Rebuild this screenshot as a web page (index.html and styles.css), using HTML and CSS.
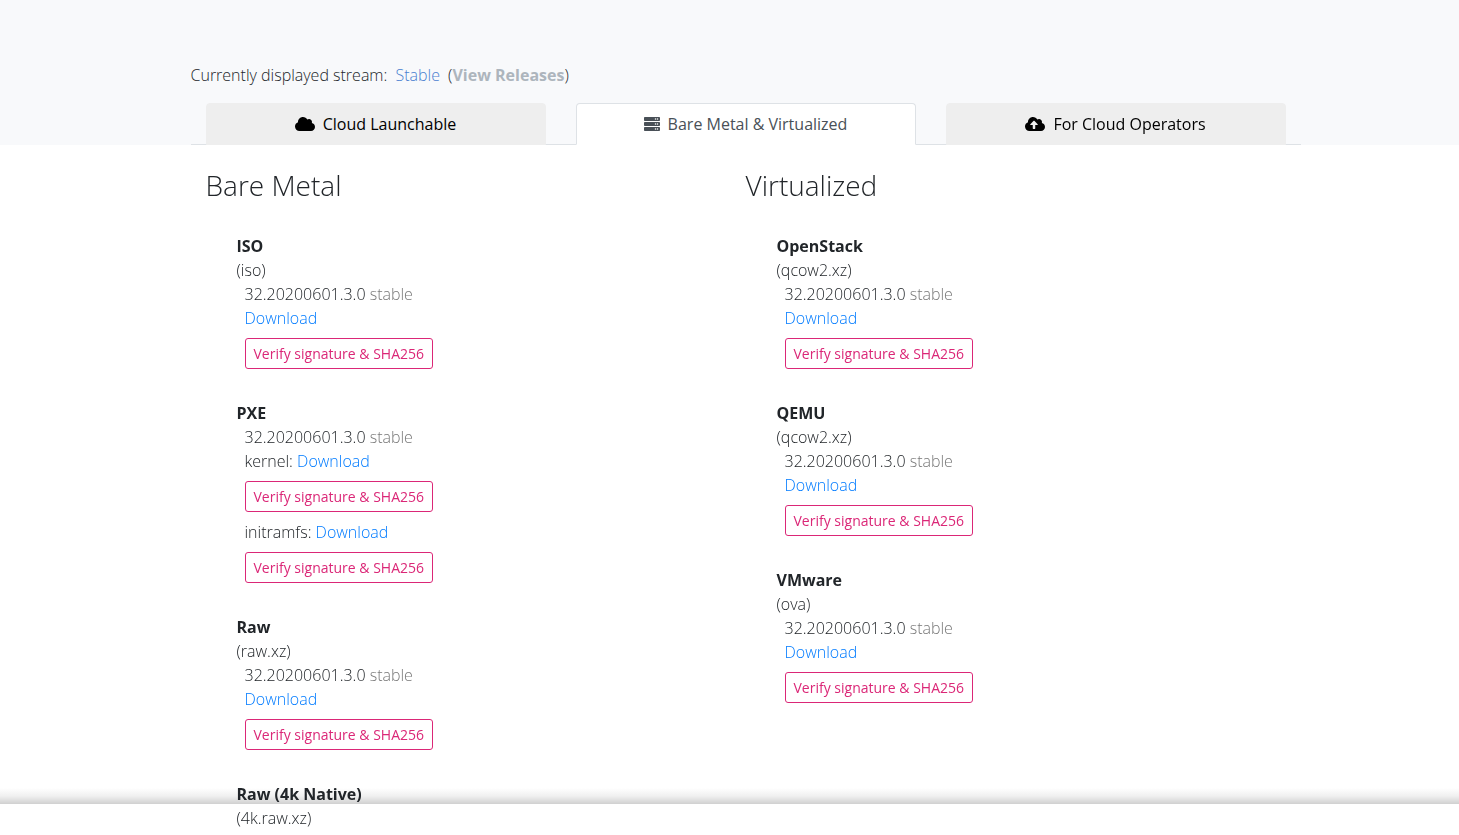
FILE: index.html
```html
<!DOCTYPE html>
<html lang="en">
<head>
<meta charset="utf-8">
<meta name="viewport" content="width=device-width, initial-scale=1">
<title>Downloads</title>
<link rel="stylesheet" href="styles.css">
</head>
<body>
<header class="masthead band">
  <div class="container">
    <p class="stream">Currently displayed stream: <a class="stream-name" href="#stable">Stable</a> (<a class="releases" href="#releases">View Releases</a>)</p>
    <nav class="tabs">
      <button class="tab" type="button"><svg class="icon icon-wide" viewBox="0 0 640 512" aria-hidden="true"><path d="M537.600 226.600c4.100-10.700 6.400-22.400 6.400-34.600 0-53-43-96-96-96-19.700 0-38.100 6-53.300 16.200C367 64.200 315.300 32 256 32c-88.400 0-160 71.600-160 160 0 2.700.1 5.400.2 8.100C40.200 219.800 0 273.200 0 336c0 79.500 64.500 144 144 144h368c70.700 0 128-57.300 128-128 0-61.900-44-113.600-102.400-125.400z"/></svg>Cloud Launchable</button>
      <button class="tab tab-active" type="button"><svg class="icon" viewBox="0 0 512 512" aria-hidden="true"><path d="M480 160H32c-17.700 0-32-14.300-32-32V64c0-17.700 14.300-32 32-32h448c17.700 0 32 14.300 32 32v64c0 17.700-14.300 32-32 32zm-48-88c-13.300 0-24 10.700-24 24s10.700 24 24 24 24-10.700 24-24-10.700-24-24-24zm-64 0c-13.300 0-24 10.700-24 24s10.700 24 24 24 24-10.700 24-24-10.700-24-24-24zm112 248H32c-17.700 0-32-14.300-32-32v-64c0-17.700 14.300-32 32-32h448c17.700 0 32 14.300 32 32v64c0 17.700-14.300 32-32 32zm-48-88c-13.300 0-24 10.700-24 24s10.700 24 24 24 24-10.700 24-24-10.700-24-24-24zm-64 0c-13.300 0-24 10.700-24 24s10.700 24 24 24 24-10.700 24-24-10.700-24-24-24zm112 248H32c-17.700 0-32-14.300-32-32v-64c0-17.700 14.300-32 32-32h448c17.700 0 32 14.300 32 32v64c0 17.700-14.300 32-32 32zm-48-88c-13.300 0-24 10.700-24 24s10.700 24 24 24 24-10.700 24-24-10.700-24-24-24zm-64 0c-13.300 0-24 10.700-24 24s10.700 24 24 24 24-10.700 24-24-10.700-24-24-24z"/></svg>Bare Metal &amp; Virtualized</button>
      <button class="tab" type="button"><svg class="icon icon-wide" viewBox="0 0 640 512" aria-hidden="true"><path d="M537.600 226.600c4.100-10.700 6.400-22.400 6.400-34.600 0-53-43-96-96-96-19.700 0-38.100 6-53.300 16.200C367 64.200 315.300 32 256 32c-88.400 0-160 71.600-160 160 0 2.700.1 5.400.2 8.100C40.200 219.800 0 273.200 0 336c0 79.500 64.500 144 144 144h368c70.700 0 128-57.300 128-128 0-61.900-44-113.600-102.400-125.400zM393.400 288H328v112c0 8.800-7.200 16-16 16h-48c-8.800 0-16-7.200-16-16V288h-65.400c-14.300 0-21.400-17.200-11.300-27.300l105.400-105.400c6.200-6.200 16.400-6.200 22.600 0l105.400 105.400c10.100 10.100 2.900 27.300-11.300 27.300z"/></svg>For Cloud Operators</button>
    </nav>
  </div>
</header>
<main class="band">
  <div class="container columns">
    <section>
      <h3 class="heading">Bare Metal</h3>
      <div class="platforms">
        <article>
          <h4 class="name">ISO</h4>
          <div>(iso)</div>
          <div class="details">
            <div>32.20200601.3.0 <span class="muted">stable</span></div>
            <div><a class="download" href="#iso">Download</a></div>
            <button class="verify" type="button">Verify signature &amp; SHA256</button>
          </div>
        </article>
        <article>
          <h4 class="name">PXE</h4>
          <div class="details">
            <div>32.20200601.3.0 <span class="muted">stable</span></div>
            <div>kernel: <a class="download" href="#kernel">Download</a></div>
            <button class="verify" type="button">Verify signature &amp; SHA256</button>
            <div class="artifact">initramfs: <a class="download" href="#initramfs">Download</a></div>
            <button class="verify" type="button">Verify signature &amp; SHA256</button>
          </div>
        </article>
        <article>
          <h4 class="name">Raw</h4>
          <div>(raw.xz)</div>
          <div class="details">
            <div>32.20200601.3.0 <span class="muted">stable</span></div>
            <div><a class="download" href="#raw">Download</a></div>
            <button class="verify" type="button">Verify signature &amp; SHA256</button>
          </div>
        </article>
        <article>
          <h4 class="name">Raw (4k Native)</h4>
          <div>(4k.raw.xz)</div>
        </article>
      </div>
    </section>
    <section>
      <h3 class="heading">Virtualized</h3>
      <div class="platforms">
        <article>
          <h4 class="name">OpenStack</h4>
          <div>(qcow2.xz)</div>
          <div class="details">
            <div>32.20200601.3.0 <span class="muted">stable</span></div>
            <div><a class="download" href="#openstack">Download</a></div>
            <button class="verify" type="button">Verify signature &amp; SHA256</button>
          </div>
        </article>
        <article>
          <h4 class="name">QEMU</h4>
          <div>(qcow2.xz)</div>
          <div class="details">
            <div>32.20200601.3.0 <span class="muted">stable</span></div>
            <div><a class="download" href="#qemu">Download</a></div>
            <button class="verify" type="button">Verify signature &amp; SHA256</button>
          </div>
        </article>
        <article>
          <h4 class="name">VMware</h4>
          <div>(ova)</div>
          <div class="details">
            <div>32.20200601.3.0 <span class="muted">stable</span></div>
            <div><a class="download" href="#vmware">Download</a></div>
            <button class="verify" type="button">Verify signature &amp; SHA256</button>
          </div>
        </article>
      </div>
    </section>
  </div>
</main>
<div class="bottom-shade"></div>
</body>
</html>
```
FILE: styles.css
```css
* {
  box-sizing: border-box;
}

body {
  margin: 0;
  background: #fff;
  color: #212529;
  font: 300 16px/24px "Open Sans", sans-serif;
}

a {
  text-decoration: none;
}

button {
  font-family: inherit;
  cursor: pointer;
}

.band {
  padding-left: 32px;
}

.masthead {
  padding-top: 63px;
  background: #f8f9fb;
}

.container {
  max-width: 1110px;
  margin: 0 auto;
}

.stream {
  margin: 0 0 16px;
}

.stream-name {
  margin: 0 4px;
  color: #4a7fd0;
}

.releases {
  color: #adb5bd;
  font-weight: 700;
}

.tabs {
  display: grid;
  grid-template-columns: repeat(3, 1fr);
  gap: 30px;
  padding: 0 15px;
  box-shadow: inset 0 -1px #dee2e6;
}

.tab {
  display: flex;
  align-items: center;
  justify-content: center;
  gap: 8px;
  padding: 8px 16px;
  border: 1px solid #eee;
  border-radius: 4px 4px 0 0;
  background: #eee;
  color: #000;
  font-size: 16px;
  font-weight: 400;
  line-height: 24px;
}

.tab-active {
  border-color: #dee2e6 #dee2e6 #fff;
  background: #fff;
  color: #495057;
}

.icon {
  width: 16px;
  height: 16px;
  fill: currentColor;
}

.icon-wide {
  width: 20px;
}

.columns {
  display: grid;
  grid-template-columns: repeat(2, 1fr);
  padding: 24px 15px 0;
}

.heading {
  margin: 0;
  font-size: 28px;
  font-weight: 300;
  line-height: 33px;
}

.platforms {
  display: flex;
  flex-direction: column;
  gap: 32px;
  padding: 32px 0 0 31px;
}

.name {
  margin: 0;
  font-size: 16px;
  font-weight: 700;
}

.details {
  padding-left: 8px;
}

.artifact {
  margin-top: 8px;
}

.muted {
  color: #777;
}

.download {
  color: #007bff;
}

.verify {
  display: block;
  margin-top: 8px;
  padding: 4px 8px;
  border: 1px solid #db2777;
  border-radius: 3px;
  background: transparent;
  color: #db2777;
  font-size: 14px;
  font-weight: 400;
  line-height: 21px;
}

.bottom-shade {
  position: fixed;
  right: 0;
  bottom: 31px;
  left: 0;
  z-index: -1;
  height: 16px;
  background: linear-gradient(#fff, #f0f0f0 50%, #d0d0d0);
}
```
